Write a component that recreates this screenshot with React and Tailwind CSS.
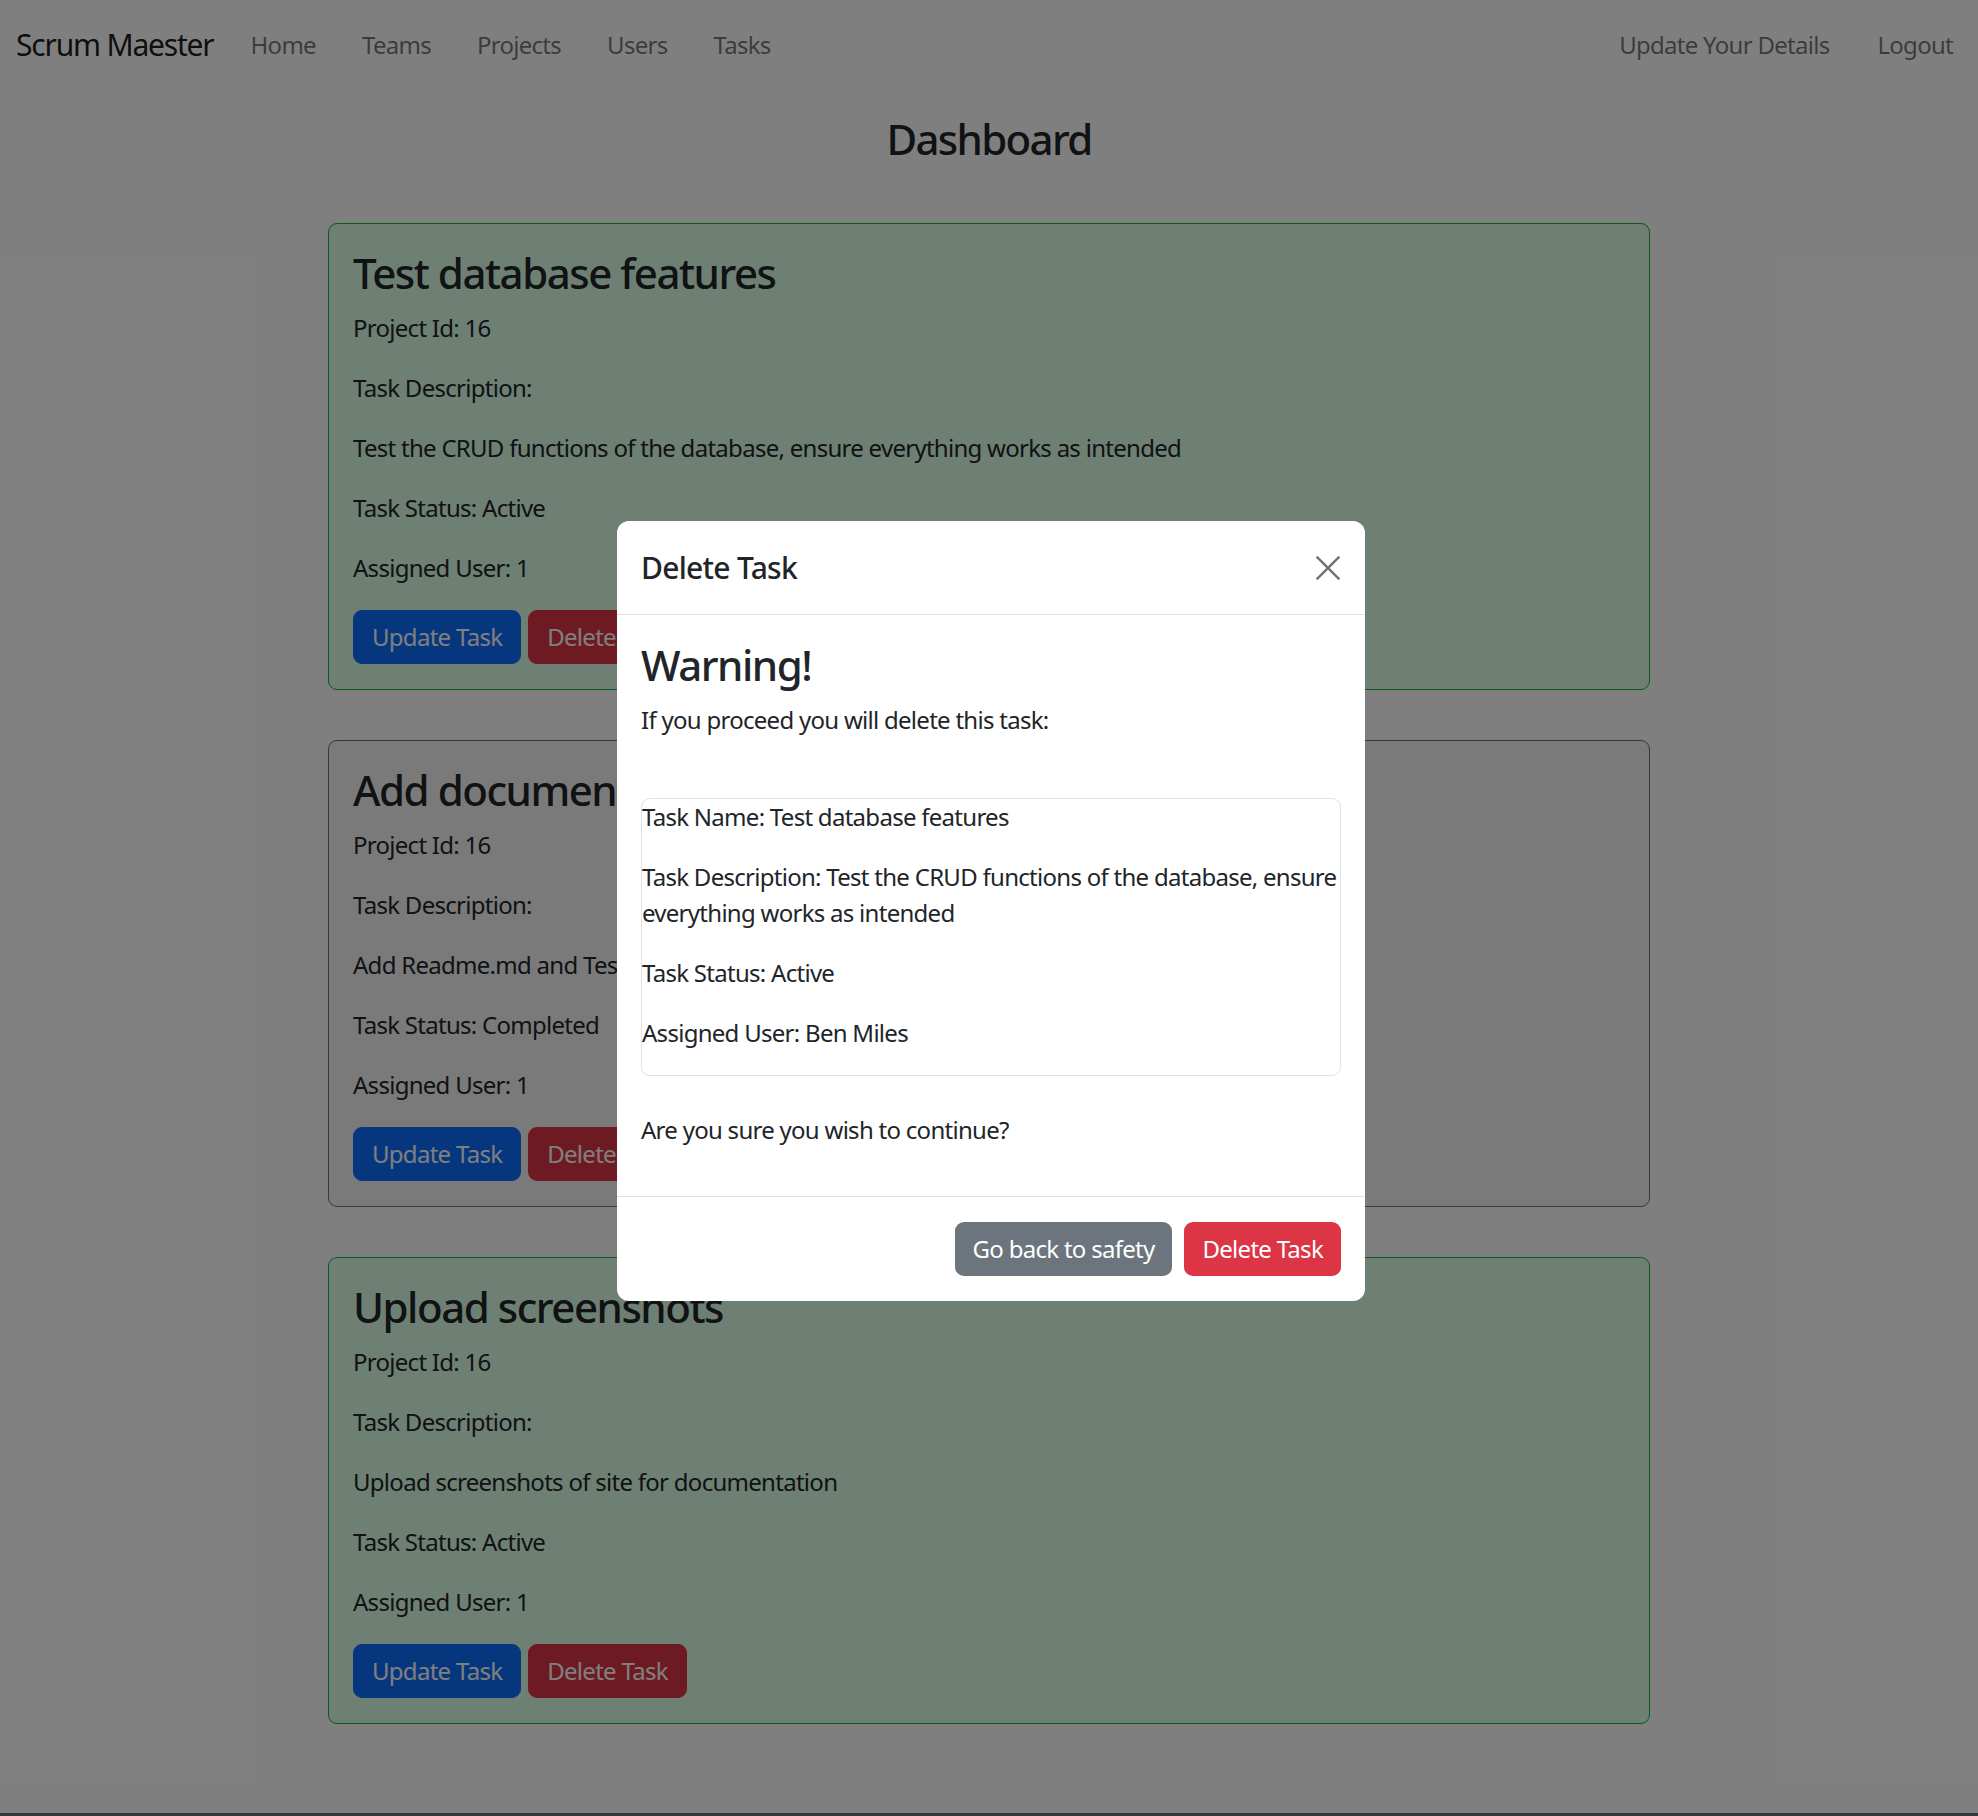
import React from 'react'

const tasks = [
  {
    name: 'Test database features',
    project: 16,
    desc: 'Test the CRUD functions of the database, ensure everything works as intended',
    status: 'Active',
    user: 1,
    tone: 'green',
  },
  {
    name: 'Add documentation',
    project: 16,
    desc: 'Add Readme.md and Testing.md files',
    status: 'Completed',
    user: 1,
    tone: 'gray',
  },
  {
    name: 'Upload screenshots',
    project: 16,
    desc: 'Upload screenshots of site for documentation',
    status: 'Active',
    user: 1,
    tone: 'green',
  },
]

function TaskCard({ task }) {
  const tone =
    task.tone === 'green'
      ? 'bg-[#dcffe6] border-[#15b43a]'
      : 'bg-[#f5f5f5] border-[#707070]'
  return (
    <div className={`border rounded-[9px] px-[24px] pt-[24px] pb-[25px] ${tone}`}>
      <h3 className="text-[42px] leading-[50px] tracking-[-0.035em] font-medium mb-[12px] text-[#212529]">{task.name}</h3>
      <p className="mb-[24px]">Project Id: {task.project}</p>
      <p className="mb-[24px]">Task Description:</p>
      <p className="mb-[24px]">{task.desc}</p>
      <p className="mb-[24px]">Task Status: {task.status}</p>
      <p className="mb-[24px]">Assigned User: {task.user}</p>
      <div className="flex gap-[7px]">
        <button className="px-[18px] py-[8px] rounded-[9px] bg-[#0d6efd] border border-[#0d6efd] text-white">Update Task</button>
        <button className="px-[18px] py-[8px] rounded-[9px] bg-[#dc3545] border border-[#dc3545] text-white">Delete Task</button>
      </div>
    </div>
  )
}

function DeleteModal() {
  return (
    <div className="absolute left-[617px] top-[521px] w-[748px] bg-white rounded-[12px] text-[#212529]">
      {/* header */}
      <div className="flex items-center justify-between px-[24px] py-[24px] border-b border-[#dee2e6]">
        <h5 className="text-[30px] leading-[45px] font-medium">Delete Task</h5>
        <svg width="26" height="26" viewBox="0 0 16 16" className="opacity-55">
          <path d="M1 1 L15 15 M15 1 L1 15" stroke="#000" strokeWidth="1.5" fill="none" />
        </svg>
      </div>
      {/* body */}
      <div className="px-[24px] pt-[25px] pb-[24px]">
        <h3 className="text-[42px] leading-[50px] tracking-[-0.035em] font-medium mb-[12px]">Warning!</h3>
        <p className="mb-[24px]">If you proceed you will delete this task:</p>
        <br />
        <div className="border border-[#dee2e6] rounded-[9px]">
          <p className="mb-[24px]">Task Name: Test database features</p>
          <p className="mb-[24px]">Task Description: Test the CRUD functions of the database, ensure everything works as intended</p>
          <p className="mb-[24px]">Task Status: Active</p>
          <p className="mb-[24px]">Assigned User: Ben Miles</p>
        </div>
        <br />
        <p className="mb-[24px]">Are you sure you wish to continue?</p>
      </div>
      {/* footer */}
      <div className="flex justify-end gap-[12px] px-[24px] pt-[25px] pb-[25px] border-t border-[#dee2e6]">
        <button className="px-[18px] py-[9px] rounded-[9px] bg-[#6c757d] text-white">Go back to safety</button>
        <button className="px-[18px] py-[9px] rounded-[9px] bg-[#dc3545] text-white">Delete Task</button>
      </div>
    </div>
  )
}

export default function App() {
  return (
    <div className="relative h-[1816px] overflow-hidden bg-white text-[#212529] text-[24px] leading-[36px] tracking-[-0.03em] font-['Segoe_UI','Noto_Sans',sans-serif] flex flex-col">
      <nav className="h-[90px] flex items-center justify-between pl-[16px] pr-[25px] shrink-0">
        <div className="flex items-center">
          <span className="text-[30px] tracking-[-0.04em] text-black/90 mr-[14px]">Scrum Maester</span>
          <div className="flex">
            {['Home', 'Teams', 'Projects', 'Users', 'Tasks'].map((l) => (
              <a key={l} className="px-[23px] text-black/55">{l}</a>
            ))}
          </div>
        </div>
        <div className="flex">
          <a className="px-[24px] text-black/55">Update Your Details</a>
          <a className="pl-[24px] text-black/55">Logout</a>
        </div>
      </nav>

      <main className="flex-1">
        <h1 className="text-center text-[42px] leading-[48px] tracking-[-0.04em] font-medium mt-[25px]">Dashboard</h1>
        <div className="w-[1322px] mx-auto mt-[60px] flex flex-col gap-[50px]">
          {tasks.map((t) => (
            <TaskCard key={t.name} task={t} />
          ))}
        </div>
      </main>
      <div className="h-[3px] bg-[#5f7777] shrink-0" />

      {/* backdrop */}
      <div className="absolute inset-0 bg-black/50" />
      <DeleteModal />
    </div>
  )
}
